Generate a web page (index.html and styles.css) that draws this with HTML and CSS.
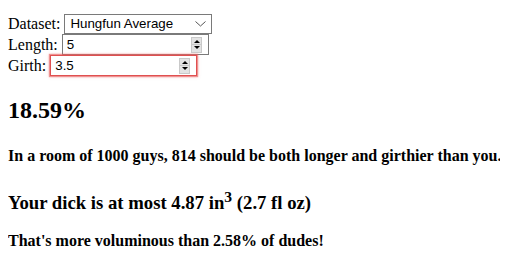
FILE: index.html
```html
<!doctype html>
<html lang="en">
<head>
  <meta charset="UTF-8">
  <title>How big is it</title>
  <link rel="stylesheet" href="styles.css">
</head>
<body>
  <form class="inputs">
    <div class="row">
      <label>Dataset:</label>
      <span class="field select">
        <span class="value">Hungfun Average</span>
        <svg class="chevron" width="11" height="6" viewBox="0 0 11 6"><path d="M0.5 0.5 L5.5 5 L10.5 0.5" fill="none" stroke="#555" stroke-width="1"/></svg>
      </span>
    </div>
    <div class="row">
      <label>Length:</label>
      <span class="field number">
        <span class="value">5</span>
        <span class="spin"><span class="up"></span><span class="down"></span></span>
      </span>
    </div>
    <div class="row">
      <label>Girth:</label>
      <span class="field number invalid">
        <span class="value">3.5</span>
        <span class="spin"><span class="up"></span><span class="down"></span></span>
      </span>
    </div>
  </form>

  <h2>18.59%</h2>
  <h4 class="oneline">In a room of 1000 guys, 814 should be both longer and girthier than you.</h4>
  <h3 class="volume">Your dick is at most 4.87 in<sup>3</sup> (2.7 fl oz)</h3>
  <h4 class="compare">That's more voluminous than 2.58% of dudes!</h4>
</body>
</html>
```

FILE: styles.css
```css
body{
  margin: 8px;
  font-family: "Liberation Serif", "Times New Roman", serif;
  font-size: 16px;
  color: #000;
  background: #fff;
}

.inputs{
  padding-top: 5px;
}

.row{
  display: flex;
  align-items: center;
  height: 21px;
}

.row label{
  margin-right: 4px;
}

.field{
  display: flex;
  align-items: center;
  box-sizing: border-box;
  width: 147px;
  height: 21px;
  border: 1px solid #7a7a7a;
  background: #fff;
  font-family: "Liberation Sans", Arial, sans-serif;
  font-size: 13.33px;
  padding-left: 4px;
}

.field .value{
  flex: 1;
}

.select{
  width: 148px;
  height: 20px;
  padding-left: 5px;
  padding-right: 5px;
}

.chevron{
  margin-top: 1px;
}

.number{
  padding-right: 6px;
}

.invalid{
  border-color: #e05050;
  box-shadow: 0 0 1px 1px rgba(230, 90, 90, 0.6), 0 0 3px 1px rgba(240, 120, 120, 0.35);
}

.spin{
  display: flex;
  flex-direction: column;
  width: 11px;
  height: 16px;
}

.spin span{
  flex: 1;
  position: relative;
  background: #e3e3e3;
  border: 1px solid #c9c9c9;
}

.spin .down{
  border-top: none;
}

.spin span::after{
  content: "";
  position: absolute;
  left: 2px;
  top: 2px;
  border-left: 3px solid transparent;
  border-right: 3px solid transparent;
}

.spin .up::after{
  border-bottom: 3px solid #000;
}

.spin .down::after{
  top: 1px;
  border-top: 3px solid #000;
}

h2{
  margin-top: 21px;
}

.oneline{
  white-space: nowrap;
  margin-top: 23px;
}

.volume{
  margin-top: 23px;
  margin-bottom: 17.5px;
}

.compare{
  margin-top: 17.5px;
  margin-bottom: 0;
}
```
